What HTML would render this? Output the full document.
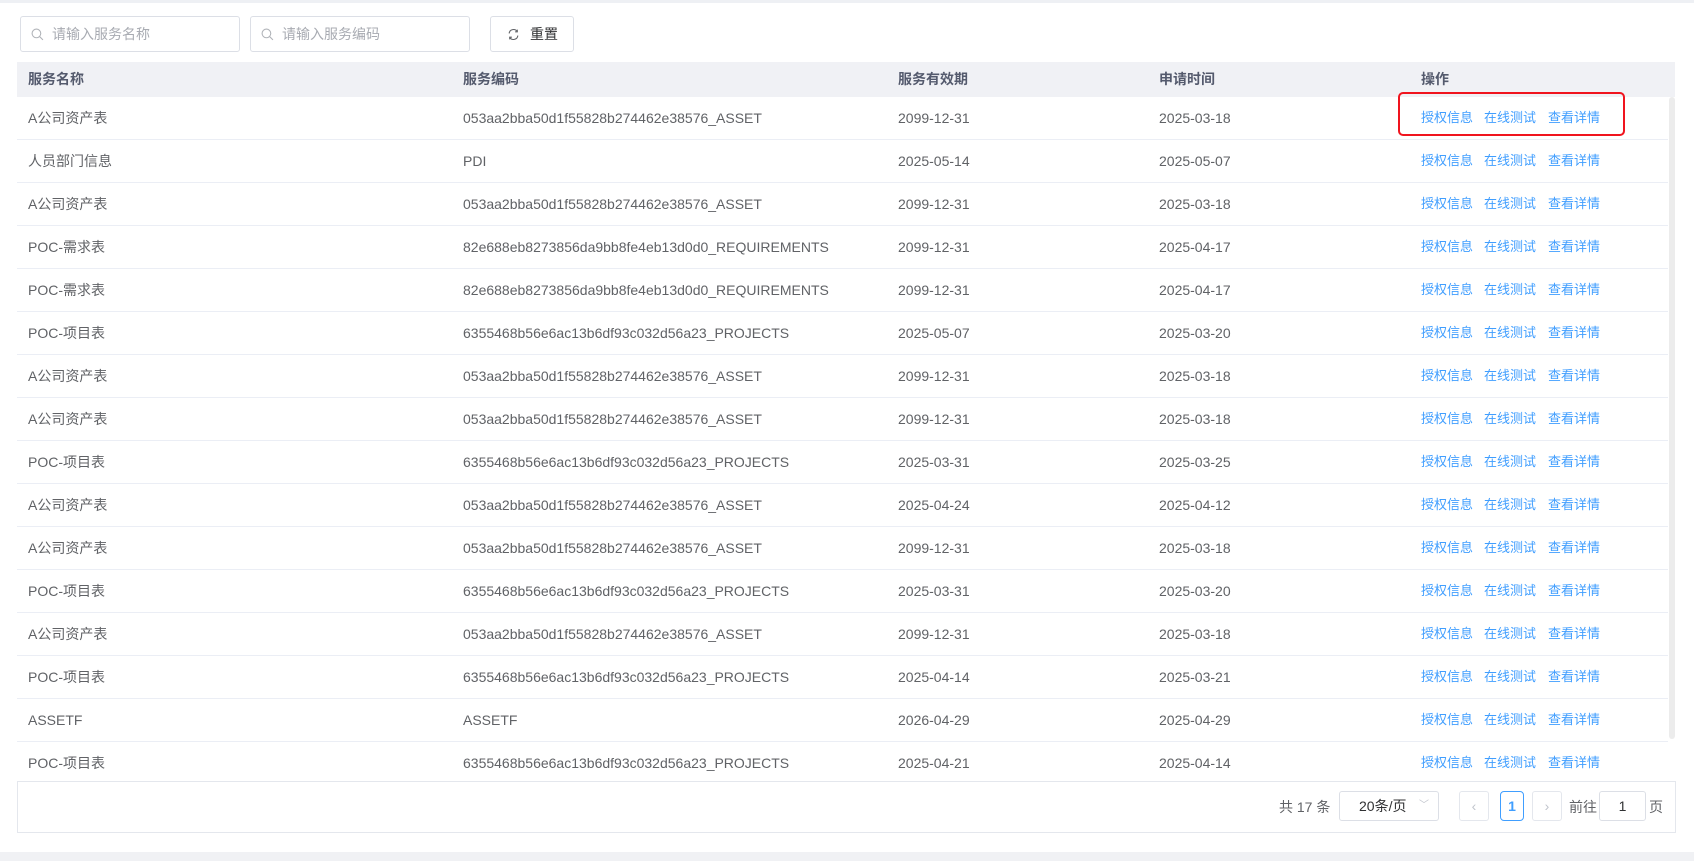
<!DOCTYPE html>
<html><head><meta charset="utf-8"><style>
*{box-sizing:border-box;margin:0;padding:0}
body{width:1694px;height:861px;background:#fff;font-family:"Liberation Sans","Noto Sans CJK SC",sans-serif;position:relative;overflow:hidden;color:#606266}
.top{position:absolute;left:0;top:0;width:1694px;height:3px;background:#eef0f4}
.inp{position:absolute;top:16px;height:36px;border:1px solid #dcdfe6;border-radius:3px;font-size:14px;color:#a8abb2;line-height:34px;padding-left:31px}
.inp svg{position:absolute;left:10px;top:11px}
.btn{position:absolute;left:490px;top:16px;width:84px;height:36px;border:1px solid #dcdfe6;border-radius:3px;font-size:14px;color:#303133;line-height:34px;padding-left:39px}
.btn svg{position:absolute;left:16px;top:11px}
.hd{position:absolute;left:17px;top:62px;width:1658px;height:35px;background:#f0f1f5}
.c{position:absolute;top:0;font-size:14px;white-space:nowrap}
.hd .c{line-height:35px;color:#545a6d;font-weight:bold}
.row{position:absolute;left:17px;width:1651px;height:43px;border-bottom:1px solid #ebeef5}
.row .c{line-height:42px;color:#606266}
.row .a{position:absolute;top:0;line-height:42px;font-size:13px;color:#409eff}
.sb{position:absolute;left:1669px;top:97px;width:6px;height:642px;background:#ececec;border-radius:3px}
.pg{position:absolute;left:17px;top:781px;width:1659px;height:52px;border:1px solid #e4e7ed;background:#fff;font-size:14px}
.pg .t{position:absolute;top:0;line-height:50px}
.bx{position:absolute;top:9px;height:30px;border-radius:3px;text-align:center;line-height:28px}
.bot{position:absolute;left:0;top:852px;width:1694px;height:9px;background:#f0f1f4}
.red{position:absolute;left:1398px;top:92px;width:227px;height:44px;border:2px solid #f0141e;border-radius:5px}
</style></head><body>
<div class="top"></div>
<div class="inp" style="left:20px;width:220px"><svg width="13" height="13" viewBox="0 0 12 12"><circle cx="5" cy="5" r="4" fill="none" stroke="#b0b3b8" stroke-width="1"/><path d="M8 8l3 3" stroke="#b0b3b8"/></svg>请输入服务名称</div>
<div class="inp" style="left:250px;width:220px"><svg width="13" height="13" viewBox="0 0 12 12"><circle cx="5" cy="5" r="4" fill="none" stroke="#b0b3b8" stroke-width="1"/><path d="M8 8l3 3" stroke="#b0b3b8"/></svg>请输入服务编码</div>
<div class="btn"><svg width="13" height="13" viewBox="0 0 12 12"><path d="M2 5a4 4 0 0 1 7.5-1.5M10 7a4 4 0 0 1-7.5 1.5" fill="none" stroke="#606266"/><path d="M9.5 1.5v2h-2M2.5 10.5v-2h2" fill="none" stroke="#606266"/></svg>重置</div>
<div class="hd"><span class="c" style="left:11px">服务名称</span><span class="c" style="left:446px">服务编码</span><span class="c" style="left:881px">服务有效期</span><span class="c" style="left:1142px">申请时间</span><span class="c" style="left:1404px">操作</span></div>
<div id="rows"></div>
<div class="sb"></div>
<div class="pg">
<span class="t" style="left:1261px;color:#606266">共 17 条</span>
<div class="bx" style="left:1321px;width:100px;border:1px solid #dcdfe6;color:#303133;text-align:left;padding-left:19px">20条/页<span style="position:absolute;right:9px;top:0;color:#c0c4cc;font-size:10px">﹀</span></div>
<div class="bx" style="left:1441px;width:30px;border:1px solid #e4e7ed;color:#c0c4cc">‹</div>
<div class="bx" style="left:1482px;width:24px;border:1px solid #409eff;border-radius:4px;color:#409eff;font-weight:bold">1</div>
<div class="bx" style="left:1514px;width:30px;border:1px solid #e4e7ed;color:#c0c4cc">›</div>
<span class="t" style="left:1551px;color:#606266">前往</span>
<div class="bx" style="left:1581px;width:47px;border:1px solid #dcdfe6;color:#303133">1</div>
<span class="t" style="left:1631px;color:#606266">页</span>
</div>
<div class="bot"></div>
<div class="red"></div>
<script>
var d=[["A公司资产表","053aa2bba50d1f55828b274462e38576_ASSET","2099-12-31","2025-03-18"],
["人员部门信息","PDI","2025-05-14","2025-05-07"],
["A公司资产表","053aa2bba50d1f55828b274462e38576_ASSET","2099-12-31","2025-03-18"],
["POC-需求表","82e688eb8273856da9bb8fe4eb13d0d0_REQUIREMENTS","2099-12-31","2025-04-17"],
["POC-需求表","82e688eb8273856da9bb8fe4eb13d0d0_REQUIREMENTS","2099-12-31","2025-04-17"],
["POC-项目表","6355468b56e6ac13b6df93c032d56a23_PROJECTS","2025-05-07","2025-03-20"],
["A公司资产表","053aa2bba50d1f55828b274462e38576_ASSET","2099-12-31","2025-03-18"],
["A公司资产表","053aa2bba50d1f55828b274462e38576_ASSET","2099-12-31","2025-03-18"],
["POC-项目表","6355468b56e6ac13b6df93c032d56a23_PROJECTS","2025-03-31","2025-03-25"],
["A公司资产表","053aa2bba50d1f55828b274462e38576_ASSET","2025-04-24","2025-04-12"],
["A公司资产表","053aa2bba50d1f55828b274462e38576_ASSET","2099-12-31","2025-03-18"],
["POC-项目表","6355468b56e6ac13b6df93c032d56a23_PROJECTS","2025-03-31","2025-03-20"],
["A公司资产表","053aa2bba50d1f55828b274462e38576_ASSET","2099-12-31","2025-03-18"],
["POC-项目表","6355468b56e6ac13b6df93c032d56a23_PROJECTS","2025-04-14","2025-03-21"],
["ASSETF","ASSETF","2026-04-29","2025-04-29"],
["POC-项目表","6355468b56e6ac13b6df93c032d56a23_PROJECTS","2025-04-21","2025-04-14"]];
var h="";d.forEach(function(r,i){h+='<div class="row" style="top:'+(97+i*43)+'px"><span class="c" style="left:11px">'+r[0]+'</span><span class="c" style="left:446px">'+r[1]+'</span><span class="c" style="left:881px">'+r[2]+'</span><span class="c" style="left:1142px">'+r[3]+'</span><span class="a" style="left:1404px">授权信息</span><span class="a" style="left:1467px">在线测试</span><span class="a" style="left:1531px">查看详情</span></div>'});
document.getElementById("rows").innerHTML=h;
</script>
</body></html>
